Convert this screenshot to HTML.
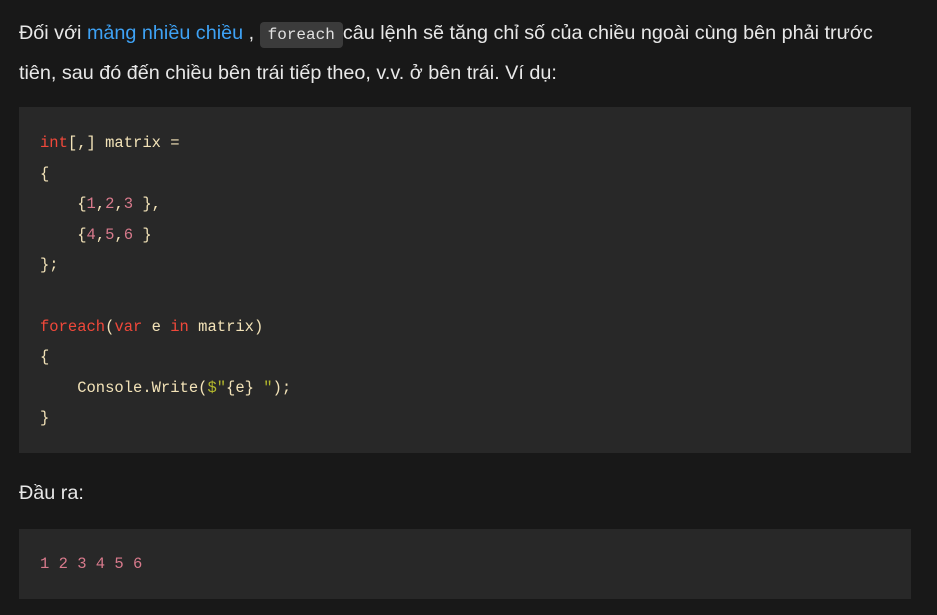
<!DOCTYPE html>
<html><head><meta charset="utf-8"><style>
body{margin:0;background:#181818;width:937px;height:615px;overflow:hidden;font-family:"Liberation Sans",sans-serif;color:#e8e8e8}
p{position:absolute;left:19px;margin:0;font-size:19.8px;line-height:38px;width:910px;white-space:nowrap}
a{color:#3ea2f5;text-decoration:none}
.ic{font-family:"Liberation Mono",monospace;font-size:16px;background:#3b3b3b;border-radius:4px;padding:4px 8px;color:#e0e0e0}
pre{position:absolute;left:19px;width:892px;margin:0;background:#282828;font-family:"Liberation Mono",monospace;font-size:15.5px;line-height:30.6px;color:#f3e3b8;padding:0 0 0 21px;box-sizing:border-box}
.k{color:#f0483a}.n{color:#d87a8c}.s{color:#b3b82c}
</style></head><body>
<p style="top:14px">Đối với <a>mảng nhiều chiều</a> , <span class="ic">foreach</span>câu lệnh sẽ tăng chỉ số của chiều ngoài cùng bên phải trước<br>tiên, sau đó đến chiều bên trái tiếp theo, v.v. ở bên trái. Ví dụ:</p>
<pre style="top:107px;height:346px;padding-top:21px"><span class="k">int</span>[,] matrix =
{
    {<span class="n">1</span>,<span class="n">2</span>,<span class="n">3</span> },
    {<span class="n">4</span>,<span class="n">5</span>,<span class="n">6</span> }
};

<span class="k">foreach</span>(<span class="k">var</span> e <span class="k">in</span> matrix)
{
    Console.Write(<span class="s">$"</span>{e} <span class="s">"</span>);
}</pre>
<p style="top:474px">Đầu ra:</p>
<pre style="top:529px;height:70px;padding-top:20px" class="n"><span class="n">1 2 3 4 5 6</span></pre>
</body></html>
